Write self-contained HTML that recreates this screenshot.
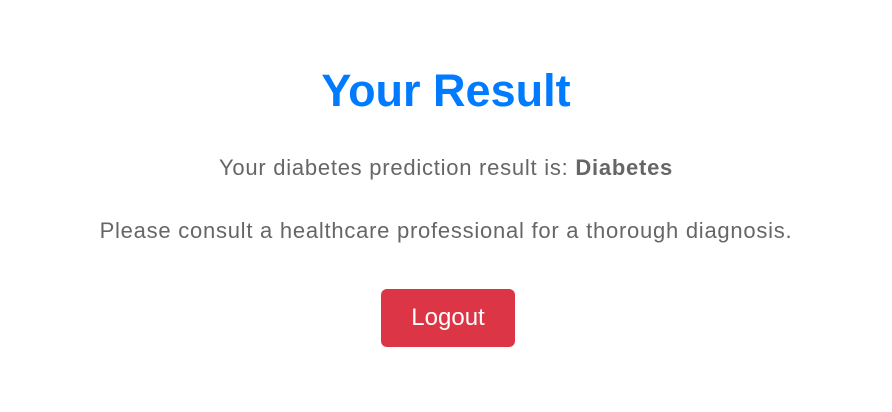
<!DOCTYPE html>
<html><head><style>
html,body{margin:0;padding:0;background:#fff;width:892px;height:412px;overflow:hidden}
body{font-family:"Liberation Sans",sans-serif;color:#666;position:relative}
h1{position:absolute;top:62px;left:0;width:892px;text-align:center;margin:0;font-size:45px;line-height:58px;color:#007bff;font-weight:bold}
.p1{position:absolute;top:154px;left:0;width:892px;text-align:center;font-size:22px;line-height:28px;letter-spacing:0.75px}
.p2{position:absolute;top:217px;left:0;width:892px;text-align:center;font-size:22px;line-height:28px;letter-spacing:0.75px}
.btn{position:absolute;left:381px;top:289px;width:134px;height:58px;background:#dc3545;border-radius:6px;color:#fff;font-size:24px;line-height:58px;text-align:center}
</style></head><body>
<h1>Your Result</h1>
<div class="p1">Your diabetes prediction result is: <b>Diabetes</b></div>
<div class="p2">Please consult a healthcare professional for a thorough diagnosis.</div>
<div class="btn">Logout</div>
</body></html>
